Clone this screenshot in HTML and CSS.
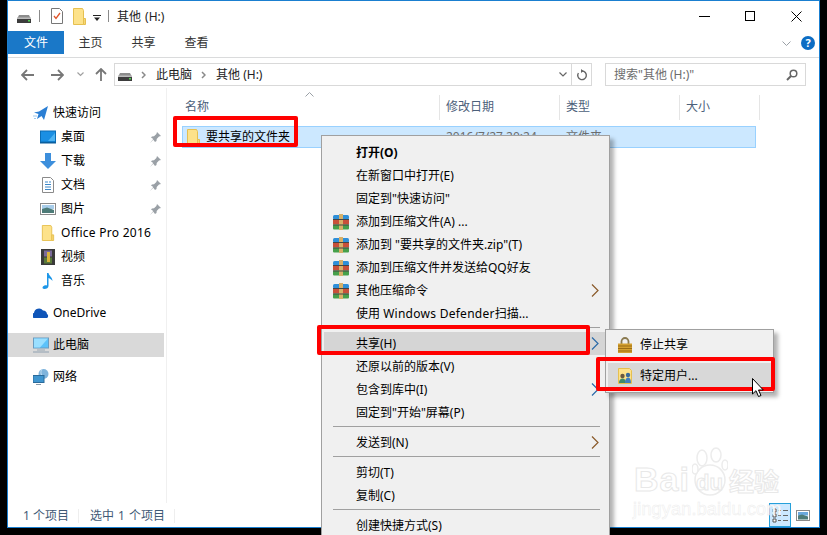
FILE: index.html
```html
<!DOCTYPE html>
<html lang="zh">
<head>
<meta charset="utf-8">
<title>其他 (H:)</title>
<link rel="stylesheet" href="styles.css">
</head>
<body>
<svg class="sprite" aria-hidden="true">
  <symbol id="drive" viewBox="0 0 14 8"><path d="M2 0h10l2 4v4H0V4z" fill="#8c8c8c"/><rect y="3" width="14" height="5" fill="#3c3c3c"/><rect x="0" y="2.500" width="14" height="1.500" fill="#bcbcbc"/><rect x="11" y="5" width="2" height="1.500" fill="#4fd24f"/></symbol>
  <symbol id="folder" viewBox="0 0 13 17"><path d="M.5.500h9l1 2v14H.5z" fill="#fde28a" stroke="#e6c050"/><path d="M10.500 10.500h2v6h-2z" fill="#f7d774" stroke="#e6c050"/></symbol>
  <symbol id="pin" viewBox="0 0 11 11"><path d="M7 0l4 4-2 .6-2.300 2.300-.2 2L5 10 3.300 7.700 0 11l3.300-4L1 5.500l1-1 2-.2L6.400 2z" fill="#9aa0a6"/></symbol>
  <symbol id="rar" viewBox="0 0 16 16"><rect x="0" y="1" width="16" height="4.500" rx="1.500" fill="#2f8fd8"/><rect y="5.500" width="16" height="5" fill="#c8503a"/><rect y="10.500" width="16" height="5" rx="1" fill="#46a04a"/><rect x="6" y="0" width="4" height="16" fill="#d7b068"/><rect y="5" width="16" height="1" fill="#444"/><rect y="10.500" width="16" height="1" fill="#444"/></symbol>
  <symbol id="chev" viewBox="0 0 8 13"><path d="M1 .5L7 6.500 1 12.500" fill="none" stroke="currentColor" stroke-width="1.200"/></symbol>
  <symbol id="crumb" viewBox="0 0 5 8"><path d="M1 1l3 3-3 3" fill="none" stroke="#8a8a8a" stroke-width="1.500"/></symbol>
  <symbol id="arrow" viewBox="0 0 13 12"><path d="M6 1L1 6l5 5M1 6h12" fill="none" stroke="currentColor" stroke-width="1.800"/></symbol>
</svg>

<div class="window">
  <header class="titlebar">
    <svg class="ic-drive"><use href="#drive"/></svg>
    <span class="qsep"></span>
    <svg class="ic-doc" viewBox="0 0 12 16"><path d="M.5.500h8l3 3v12H.5z" fill="#fff" stroke="#777"/><path d="M3 8l2 2.500L9 5" fill="none" stroke="#e0552a" stroke-width="1.300"/></svg>
    <svg class="ic-folder-q"><use href="#folder"/></svg>
    <svg class="ic-drop" viewBox="0 0 8 6"><rect width="8" height="1" fill="#222"/><path d="M1 2.500h6L4 6z" fill="#222"/></svg>
    <span class="qsep qsep-last"></span>
    <span class="title">其他 (H:)</span>
    <div class="winctl">
      <svg class="ctl" viewBox="0 0 11 11"><path d="M0 5.500h11" stroke="#000"/></svg>
      <svg class="ctl" viewBox="0 0 11 11"><rect x=".5" y=".5" width="9" height="9" fill="none" stroke="#000"/></svg>
      <svg class="ctl" viewBox="0 0 11 11"><path d="M.5.500l10 10M10.500.500l-10 10" stroke="#000"/></svg>
    </div>
  </header>

  <nav class="tabs">
    <span class="tab tab-file">文件</span>
    <span class="tab">主页</span>
    <span class="tab">共享</span>
    <span class="tab">查看</span>
    <span class="tabs-right">
      <svg class="ribbon-chev" viewBox="0 0 9 5"><path d="M.5.500l4 4 4-4" fill="none" stroke="#9aa0a6"/></svg>
      <span class="help">?</span>
    </span>
  </nav>

  <div class="addr-row">
    <svg class="nav nav-back"><use href="#arrow"/></svg>
    <svg class="nav nav-fwd"><use href="#arrow"/></svg>
    <svg class="nav-down" viewBox="0 0 7 5"><path d="M.5.500l3 3 3-3" fill="none" stroke="#a0a0a0" stroke-width="1.200"/></svg>
    <svg class="nav-up" viewBox="0 0 12 13"><path d="M1 6l5-5 5 5M6 1v12" fill="none" stroke="#777" stroke-width="1.800"/></svg>
    <div class="addr">
      <svg class="ic-drive-addr"><use href="#drive"/></svg>
      <svg class="crumb"><use href="#crumb"/></svg>
      <span class="crumb-text">此电脑</span>
      <svg class="crumb"><use href="#crumb"/></svg>
      <span class="crumb-text">其他 (H:)</span>
      <span class="addr-end">
        <svg class="addr-v" viewBox="0 0 8 5"><path d="M.5.500l3.500 3.500 3.500-3.500" fill="none" stroke="#666" stroke-width="1.200"/></svg>
        <span class="addr-refresh"><svg viewBox="0 0 12 12"><path d="M6 2a4.300 4.300 0 1 1-3.600 2" fill="none" stroke="#666" stroke-width="1.400"/><path d="M5 0v4l2.500-2z" fill="#666"/></svg></span>
      </span>
    </div>
    <div class="search">
      <span>搜索"其他 (H:)"</span>
      <svg viewBox="0 0 12 12"><circle cx="7.500" cy="4.500" r="3.300" fill="none" stroke="#666" stroke-width="1.500"/><path d="M5 7l-4 4" stroke="#666" stroke-width="2"/></svg>
    </div>
  </div>

  <div class="main">
    <aside class="side">
      <div class="nav-item nav-top">
        <svg class="i16" viewBox="0 0 16 16"><path d="M15 1L11 15 8.500 11 4 14l1.500-5L1 7.500l5-1z" fill="#2b7fd4"/><path d="M0 11h4M1 13.500h2" stroke="#9cc8ee"/></svg>
        <span>快速访问</span>
      </div>
      <div class="nav-item sub">
        <svg class="i16" viewBox="0 0 16 14"><rect x=".5" y="1" width="15" height="11" fill="#1a8fe3" stroke="#0b6db5"/><path d="M8 11l7-8v8z" fill="#4fb4f2"/><rect y="12" width="16" height="1.500" fill="#0b5f9e"/></svg>
        <span>桌面</span><svg class="pin"><use href="#pin"/></svg>
      </div>
      <div class="nav-item sub">
        <svg class="i16" viewBox="0 0 16 16"><path d="M5 0h6v8h5l-8 8-8-8h5z" fill="#3d8fdc"/></svg>
        <span>下载</span><svg class="pin"><use href="#pin"/></svg>
      </div>
      <div class="nav-item sub">
        <svg class="i16" viewBox="0 0 16 16"><path d="M2.500.500h8l3 3v12h-11z" fill="#fff" stroke="#8a8a8a"/><path d="M5 5h3M9 5h2M5 7.500h6M5 10h6M5 12.500h6" stroke="#3c87c8"/></svg>
        <span>文档</span><svg class="pin"><use href="#pin"/></svg>
      </div>
      <div class="nav-item sub">
        <svg class="i16" viewBox="0 0 16 14"><rect x=".5" y="1.500" width="15" height="11" fill="#fff" stroke="#8a8a8a"/><rect x="2" y="3" width="12" height="4" fill="#a8cdea"/><path d="M2 7l5-1.500L14 8v3H2z" fill="#4d7b78"/></svg>
        <span>图片</span><svg class="pin"><use href="#pin"/></svg>
      </div>
      <div class="nav-item sub">
        <svg class="i16"><use href="#folder"/></svg>
        <span class="latin">Office Pro 2016</span>
      </div>
      <div class="nav-item sub">
        <svg class="i16" viewBox="0 0 16 16"><rect x="1" y="0" width="14" height="16" fill="#3a3a3a"/><rect x="4" y="1.500" width="8" height="6" fill="#7a6a9a"/><rect x="4" y="8.500" width="8" height="6" fill="#5a7a3a"/><rect x="7" y="3" width="3" height="10" fill="#d8b23a"/></svg>
        <span>视频</span>
      </div>
      <div class="nav-item sub">
        <svg class="i16" viewBox="0 0 16 16"><path d="M7 0h1.500c.5 3 4 4 4 8-1-1.500-2.500-2.500-4-3v8c0 2-2 3-4 3s-2.500-1.500-1.500-2.500S6 12 7 12.500z" fill="#1c96e8"/></svg>
        <span>音乐</span>
      </div>
      <div class="nav-item nav-gap">
        <svg class="i16" viewBox="0 0 16 12"><path d="M1 11a2.500 2.500 0 0 1 0-5 5 5 0 0 1 9-2.500 4 4 0 0 1 4 3.500 2.300 2.300 0 0 1 0 4z" fill="#0f55b8"/></svg>
        <span>OneDrive</span>
      </div>
      <div class="nav-item nav-gap selected">
        <svg class="i16" viewBox="0 0 16 15"><rect x=".5" y=".5" width="15" height="10" fill="#5cc2fa" stroke="#6a9cc0"/><path d="M1 1h14L7 10H1z" fill="#9adfff"/><path d="M4 12.500h8" stroke="#9aa8b4"/><path d="M0 14.500h16" stroke="#8fa0b0"/></svg>
        <span>此电脑</span>
      </div>
      <div class="nav-item nav-gap">
        <svg class="i16" viewBox="0 0 16 16"><circle cx="10.500" cy="5" r="5" fill="#7fb4dc"/><path d="M9 0c-2 3-1 7 2 9" fill="none" stroke="#c9e2f4"/><rect x="0" y="6.500" width="11" height="7" fill="#3f95cf" stroke="#2a6a9a"/><path d="M3 15.500h5" stroke="#8a9aa8"/></svg>
        <span>网络</span>
      </div>
    </aside>

    <section class="content">
      <div class="head">
        <span class="col col-name">名称<svg class="sort" viewBox="0 0 9 5"><path d="M.5 4.500l4-4 4 4" fill="none" stroke="#9aa0a6"/></svg></span>
        <span class="col col-date">修改日期</span>
        <span class="col col-type">类型</span>
        <span class="col col-size">大小</span>
      </div>
      <div class="row">
        <span class="cell-name"><svg class="ic-folder-row"><use href="#folder"/></svg>要共享的文件夹</span>
        <span class="cell-date">2016/7/27 20:24</span>
        <span class="cell-type">文件夹</span>
      </div>
    </section>
  </div>

  <footer class="status">
    <span class="st st-a">1 个项目</span>
    <span class="st st-b">选中 1 个项目</span>
    <span class="views">
      <span class="view view-on"><svg viewBox="0 0 17 17"><path d="M1 2h3v3H1zM1 7h3v3H1zM1 12h3v3H1z" fill="#fff" stroke="#555"/><path d="M6 3.500h3M11 3.500h5M6 8.500h3M11 8.500h5M6 13.500h3M11 13.500h5" stroke="#666"/></svg></span>
      <span class="view"><svg viewBox="0 0 14 11"><rect x=".5" y=".5" width="13" height="10" fill="#fff" stroke="#8a8a8a"/><rect x="2" y="2" width="10" height="3.500" fill="#6aa9de"/><path d="M2 5.500l4-1 6 2v3H2z" fill="#4d7b78"/></svg></span>
    </span>
  </footer>
</div>

<div class="wm" aria-hidden="true">
  <span class="wm-bai">Bai</span>
  <svg class="wm-paw" viewBox="0 0 36 50"><g fill="#fff" stroke="#ececec" stroke-width="1.500"><circle cx="18" cy="33" r="15"/><ellipse cx="10" cy="11" rx="5" ry="8"/><ellipse cx="24" cy="8" rx="5" ry="7"/><ellipse cx="3" cy="22" rx="3" ry="5"/><ellipse cx="33" cy="18" rx="3" ry="5"/></g></svg>
  <span class="wm-du">du</span>
  <span class="wm-cn">经验</span>
  <span class="wm-url">jingyan.baidu.com</span>
</div>

<div class="menu">
  <div class="mi strong"><span class="mi-ic"></span><span class="mi-t">打开(O)</span></div>
  <div class="mi"><span class="mi-ic"></span><span class="mi-t">在新窗口中打开(E)</span></div>
  <div class="mi"><span class="mi-ic"></span><span class="mi-t">固定到"快速访问"</span></div>
  <div class="mi"><span class="mi-ic"><svg class="rar"><use href="#rar"/></svg></span><span class="mi-t">添加到压缩文件(A) ...</span></div>
  <div class="mi"><span class="mi-ic"><svg class="rar"><use href="#rar"/></svg></span><span class="mi-t">添加到 "要共享的文件夹.zip"(T)</span></div>
  <div class="mi"><span class="mi-ic"><svg class="rar"><use href="#rar"/></svg></span><span class="mi-t">添加到压缩文件并发送给QQ好友</span></div>
  <div class="mi"><span class="mi-ic"><svg class="rar"><use href="#rar"/></svg></span><span class="mi-t">其他压缩命令</span><svg class="chev amber"><use href="#chev"/></svg></div>
  <div class="mi"><span class="mi-ic"></span><span class="mi-t">使用 <span class="latin">Windows Defender</span>扫描...</span></div>
  <div class="msep"></div>
  <div class="mi hot"><span class="mi-ic"></span><span class="mi-t">共享(H)</span><svg class="chev blue"><use href="#chev"/></svg></div>
  <div class="mi"><span class="mi-ic"></span><span class="mi-t">还原以前的版本(V)</span></div>
  <div class="mi"><span class="mi-ic"></span><span class="mi-t">包含到库中(I)</span><svg class="chev blue"><use href="#chev"/></svg></div>
  <div class="mi"><span class="mi-ic"></span><span class="mi-t">固定到"开始"屏幕(P)</span></div>
  <div class="msep"></div>
  <div class="mi"><span class="mi-ic"></span><span class="mi-t">发送到(N)</span><svg class="chev amber"><use href="#chev"/></svg></div>
  <div class="msep"></div>
  <div class="mi"><span class="mi-ic"></span><span class="mi-t">剪切(T)</span></div>
  <div class="mi"><span class="mi-ic"></span><span class="mi-t">复制(C)</span></div>
  <div class="msep"></div>
  <div class="mi"><span class="mi-ic"></span><span class="mi-t">创建快捷方式(S)</span></div>
</div>

<div class="submenu">
  <div class="si">
    <svg class="si-ic" viewBox="0 0 14 16"><path d="M3.500 7V4.500a3.500 3.500 0 0 1 7 0V7" fill="none" stroke="#8a7a50" stroke-width="1.800"/><rect y="6.500" width="14" height="9.500" fill="#d4a030"/><path d="M0 9h14M0 11.500h14M0 14h14" stroke="#9a6c14"/></svg>
    <span>停止共享</span>
  </div>
  <div class="si si-hot">
    <svg class="si-ic" viewBox="0 0 14 16"><path d="M.5.500h11l2 2v13H.5z" fill="#fde28a" stroke="#e6c050"/><circle cx="4.500" cy="8" r="2.200" fill="#6a5a40"/><circle cx="10" cy="7" r="2.200" fill="#3a6a9a"/><path d="M1 15c0-3 1.500-4.500 3.500-4.500S8 12 8 15z" fill="#3f8a6a"/><path d="M7 15c0-3 1-5.500 3-5.500s3 2 3 5.500z" fill="#3f7fc0"/></svg>
    <span>特定用户...</span>
  </div>
</div>

<div class="redbox rb-folder"></div>
<div class="redbox rb-share"></div>
<div class="redbox rb-user"></div>

<svg class="cursor" viewBox="0 0 12 20"><path d="M.5.500v15.500l3.500-3.300 2.500 5.800 2.500-1-2.500-5.500h4.800z" fill="#fff" stroke="#000"/></svg>
</body>
</html>
```

FILE: styles.css
```css
* { box-sizing: border-box; }
html, body { margin: 0; padding: 0; height: 535px; overflow: hidden; background: #000; }
body {
  position: relative;
  width: 827px;
  font: 12px/16px "Noto Sans", "Noto Sans CJK SC", sans-serif;
  color: #000;
}
svg { display: block; flex: none; }
.sprite { width: 0; height: 0; position: absolute; }
.latin { letter-spacing: .27px; }

.window {
  position: absolute;
  left: 7px; top: 0;
  width: 813px; height: 528px;
  background: #fff;
  border: 1px solid #1a7fd0;
  display: flex;
  flex-direction: column;
}

.titlebar { height: 30px; display: flex; align-items: center; flex: none; padding-left: 9px; }
.ic-drive { width: 14px; height: 8px; margin: 6px 0 0; }
.qsep { width: 1px; height: 12px; background: #8a8a8a; margin: 0 11px 0 8px; }
.qsep-last { margin: 0 8px 0 7px; }
.ic-doc { width: 12px; height: 16px; }
.ic-folder-q { width: 13px; height: 17px; margin-left: 10px; }
.ic-drop { width: 8px; height: 6px; margin: 3px 0 0 7px; }
.title { font-size: 12px; color: #222; margin-top: 2px; word-spacing: 1px; }
.winctl { margin-left: auto; display: flex; }
.ctl { width: 11px; height: 11px; margin-right: 35px; }
.ctl:last-child { margin-right: 17px; }

.tabs { height: 27px; display: flex; flex: none; border-bottom: 1px solid #dadbdc; padding-bottom: 3px; }
.tab { width: 53px; text-align: center; line-height: 24px; color: #333; }
.tab-file { width: 56px; background: #1a78c8; color: #fff; }
.tabs-right { margin-left: auto; display: flex; align-items: center; padding: 1px 4px 0 0; }
.ribbon-chev { width: 9px; height: 5px; margin-right: 10px; }
.help {
  width: 14px; height: 14px; border-radius: 50%;
  background: #0c6dc4; color: #fff;
  font: bold 11px/14px "Noto Sans", sans-serif;
  text-align: center;
}

.addr-row { height: 30px; flex: none; display: flex; align-items: center; padding-top: 3px; padding-left: 13px; }
.nav { width: 13px; height: 12px; color: #777; }
.nav-fwd { margin-left: 17px; transform: scaleX(-1); }
.nav-down { width: 7px; height: 5px; margin-left: 13px; }
.nav-up { width: 12px; height: 13px; margin-left: 11px; }
.addr {
  width: 478px; height: 23px; margin-left: 7px;
  border: 1px solid #d9d9d9;
  display: flex; align-items: center;
  padding-left: 3px;
}
.ic-drive-addr { width: 14px; height: 8px; margin-top: 4px; }
.crumb { width: 5px; height: 8px; margin: 0 10px 0 9px; }
.crumb-text { color: #222; }
.addr-end { margin-left: auto; display: flex; align-items: center; height: 100%; }
.addr-v { width: 8px; height: 5px; margin-right: 4px; }
.addr-refresh { width: 20px; height: 100%; border-left: 1px solid #d9d9d9; display: flex; align-items: center; justify-content: center; }
.addr-refresh svg { width: 12px; height: 12px; }
.search {
  width: 201px; height: 23px; margin-left: 13px;
  border: 1px solid #d9d9d9;
  display: flex; align-items: center; justify-content: space-between;
  padding: 0 7px 0 8px;
  color: #6d6d6d;
}
.search svg { width: 12px; height: 12px; }

.main { flex: 1; display: flex; min-height: 0; }
.side { width: 159px; flex: none; border-right: 1px solid #f0f0f0; padding-top: 13px; }
.nav-item { height: 24px; display: flex; align-items: center; padding-left: 25px; position: relative; margin-right: 2px; }
.nav-item .i16 { width: 16px; height: 16px; margin-right: 4px; }
.nav-item.sub { padding-left: 32px; }
.nav-item.sub .i16 { margin-right: 5px; }
.nav-gap { margin-top: 8px; }
.selected { background: #d9d9d9; }
.pin { width: 11px; height: 11px; margin-left: auto; margin-right: 3px; }

.content { flex: 1; min-width: 0; }
.head { display: flex; height: 25px; margin-top: 7px; color: #4c607a; padding-left: 8px; }
.col { height: 25px; border-right: 1px solid #e5e5e5; padding-top: 4px; padding-left: 6px; position: relative; }
.col-name { width: 265px; padding-left: 10px; }
.col-date { width: 120px; }
.col-type { width: 120px; }
.col-size { width: 80px; }
.sort { position: absolute; left: 130px; top: -3px; width: 9px; height: 5px; }
.row {
  width: 574px; height: 22px; margin: 6px 0 0 15px;
  background: #cce8ff; border: 1px solid #99d1ff;
  display: flex; align-items: center;
  color: #000;
}
.cell-name { width: 263px; display: flex; align-items: center; padding-left: 4px; }
.ic-folder-row { width: 13px; height: 17px; margin-right: 6px; }
.cell-date { width: 120px; color: #6d6d6d; }
.cell-type { color: #6d6d6d; }

.status { height: 24px; flex: none; display: flex; align-items: center; color: #3f5a76; padding: 2px 0 0 15px; position: relative; }
.st { height: 14px; line-height: 14px; border-right: 1px solid #eee; }
.st-a { width: 56px; }
.st-b { width: 96px; padding-left: 11px; word-spacing: 1px; }
.views { margin-left: auto; display: flex; align-items: center; height: 100%; margin-top: -2px; padding-right: 8px; }
.view { display: flex; align-items: center; justify-content: center; margin-left: 4px; width: 16px; }
.view svg { width: 14px; height: 11px; }
.view-on { width: 22px; height: 24px; background: #cce8ff; border: 1px solid #26a0da; }
.view-on svg { width: 17px; height: 17px; }

.wm { position: absolute; left: 633px; top: 445px; width: 150px; height: 75px; color: #fff; }
.wm span { position: absolute; -webkit-text-stroke: 1px #e8e8e8; font-family: "Liberation Sans", sans-serif; font-weight: bold; }
.wm-bai { left: 1px; top: 16px; font-size: 34px; line-height: 36px; letter-spacing: 1px; }
.wm-paw { position: absolute; left: 59px; top: 2px; width: 36px; height: 50px; }
.wm-du { left: 63px; top: 25px; font-size: 22px; line-height: 26px; }
.wm-cn { left: 96px; top: 20px; font-size: 25px; line-height: 30px; font-family: "Noto Sans CJK SC", sans-serif !important; }
.wm-url { left: 0; top: 54px; font-size: 18px; line-height: 20px; letter-spacing: .2px; font-weight: normal !important; -webkit-text-stroke: .5px #ececec !important; }

.menu {
  position: absolute;
  left: 321px; top: 135px;
  width: 289px; height: 420px;
  background: #f0f0f0;
  border: 1px solid #a0a0a0;
  padding: 5px 2px 0;
  box-shadow: 4px 4px 4px rgba(0,0,0,.3);
}
.mi { height: 23px; display: flex; align-items: center; position: relative; }
.mi-ic { width: 32px; flex: none; display: flex; justify-content: center; padding-left: 2px; }
.strong { font-weight: bold; }
.rar { width: 16px; height: 16px; }
.msep { height: 7px; padding: 2px 0 0 9px; }
.msep::before { content: ""; display: block; width: 267px; height: 1px; background: #a0a0a0; }
.hot { background: #d5d5d5; }
.chev { position: absolute; left: 267px; top: 5px; width: 8px; height: 13px; }
.amber { color: #8a5a2a; }
.blue { color: #2a6aa8; }

.submenu {
  position: absolute;
  left: 605px; top: 329px;
  width: 169px; height: 64px;
  background: #f0f0f0;
  border: 1px solid #a0a0a0;
  padding: 1px 2px;
  box-shadow: 4px 4px 4px rgba(0,0,0,.3);
}
.si { height: 28px; display: flex; align-items: center; padding-left: 10px; }
.si span { margin-left: 8px; }
.si-ic { width: 14px; height: 16px; }
.si-hot { background: #d8d8d8; height: 25px; margin-top: 4px; }

.redbox { position: absolute; border: 4px solid #f00; border-radius: 2px; }
.rb-folder { left: 173px; top: 116px; width: 125px; height: 31px; }
.rb-share { left: 317px; top: 325px; width: 273px; height: 30px; }
.rb-user { left: 596px; top: 357px; width: 179px; height: 34px; }

.cursor { position: absolute; left: 752px; top: 378px; width: 12px; height: 20px; }
```
